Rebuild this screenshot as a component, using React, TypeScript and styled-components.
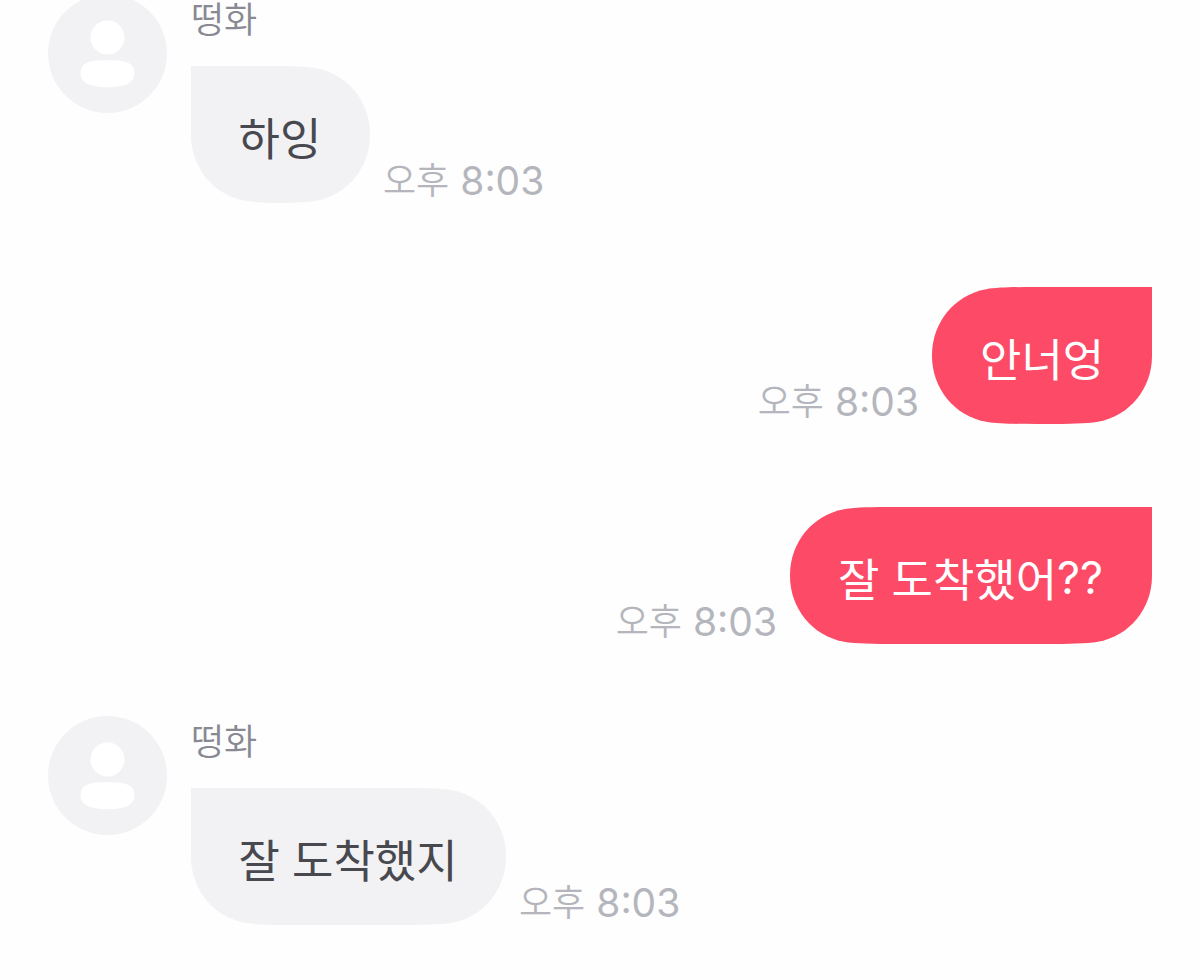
import styled, { createGlobalStyle } from "styled-components"

const messages = [
  { id: 1, mine: false, name: '떵화', text: '하잉', width: 179 },
  { id: 2, mine: true, name: '', text: '안너엉', width: 220 },
  { id: 3, mine: true, name: '', text: '잘 도착했어', tail: '??', width: 362 },
  { id: 4, mine: false, name: '떵화', text: '잘 도착했지', width: 315 },
]

// round bubble with a soft shoulder, one top corner stays square
const bubbleShape = (w: number, mine: boolean) => {
  const s = Math.min(104, w / 2)
  const top = mine
    ? `M0 68C0 36 22 8 54 2.2C66 0.2 84 0 ${s} 0H${w}V69`
    : `M0 68V0H${w - s}C${w - 84} 0 ${w - 66} 0.2 ${w - 54} 2.2C${w - 22} 8 ${w} 36 ${w} 68V69`
  return `${top}C${w} 101 ${w - 22} 129 ${w - 54} 134.8C${w - 66} 136.8 ${w - 84} 137 ${w - s} 137H${s}C84 137 66 136.8 54 134.8C22 129 0 101 0 69Z`
}

const App = () => {
  return (
    <Chat>
      <GlobalStyle />
      {messages.map((message) => (
        <Message key={message.id} $mine={message.mine}>
          {!message.mine && <Profile />}
          <Content>
            {!message.mine && <Name>{message.name}</Name>}
            <Line $mine={message.mine}>
              <Bubble $mine={message.mine} $width={message.width}>
                <span>{message.text}</span>
                {message.tail && <Tail>{message.tail}</Tail>}
              </Bubble>
              <Time>
                <span>오후</span>
                <Clock>8:03</Clock>
              </Time>
            </Line>
          </Content>
        </Message>
      ))}
    </Chat>
  )
}

const Profile = () => {
  return (
    <Avatar viewBox="0 0 119 119">
      <circle cx="59.5" cy="59.5" r="59.5" fill="#f2f2f5" />
      <circle cx="59.5" cy="43.5" r="17" fill="#ffffff" />
      <path
        d="M59.5 66.3C74 66.3 86.5 67 86.5 79.5C86.5 90.5 73 93.2 59.5 93.2C46 93.2 32.5 90.5 32.5 79.5C32.5 67 45 66.3 59.5 66.3Z"
        fill="#ffffff"
      />
    </Avatar>
  )
}

export default App

const GlobalStyle = createGlobalStyle`
  body {
    margin: 0;
    background: #fefefe;
    overflow: hidden;
  }
`

const Chat = styled.div`
  height: 980px;
  box-sizing: border-box;
  overflow: hidden;
  padding: 0 48px;
  font-family: 'Noto Sans CJK KR', sans-serif;
  font-weight: 400;
`

const Message = styled.div<{ $mine: boolean }>`
  display: flex;
  justify-content: ${({ $mine }) => ($mine ? 'flex-end' : 'flex-start')};
  align-items: flex-start;
  gap: 24px;
  margin-bottom: 84px;

  &:first-child {
    margin-top: -6px;
  }

  &:nth-child(2) {
    margin-bottom: 83px;
  }

  &:nth-child(3) {
    margin-bottom: 72px;
  }
`

const Avatar = styled.svg`
  width: 119px;
  height: 119px;
  flex-shrink: 0;
`

const Content = styled.div`
  display: flex;
  flex-direction: column;
`

const Name = styled.div`
  height: 72px;
  font-weight: 350;
  font-size: 36px;
  line-height: 47px;
  color: #888992;
`

const Line = styled.div<{ $mine: boolean }>`
  display: flex;
  flex-direction: ${({ $mine }) => ($mine ? 'row-reverse' : 'row')};
  align-items: flex-end;
  gap: 13px;
`

const Bubble = styled.div<{ $mine: boolean; $width: number }>`
  width: ${({ $width }) => $width}px;
  height: 137px;
  box-sizing: border-box;
  display: flex;
  align-items: center;
  padding: 5px 0 0 ${({ $mine }) => ($mine ? '48px' : '47.5px')};
  white-space: pre;
  font-size: 45px;
  line-height: 60px;
  word-spacing: 2px;
  color: ${({ $mine }) => ($mine ? '#ffffff' : '#48484f')};
  background: ${({ $mine }) => ($mine ? '#fd4a67' : '#f2f2f5')};
  clip-path: path('${({ $width, $mine }) => bubbleShape($width, $mine)}');
`

const Tail = styled.span`
  font-family: Inter, sans-serif;
  font-size: 45px;
`

const Time = styled.div`
  height: 45px;
  display: flex;
  align-items: center;
  gap: 11px;
  white-space: nowrap;
  font-weight: 350;
  font-size: 36px;
  line-height: 46px;
  color: #b5b6bd;

  span:first-child {
    margin-top: -6px;
  }
`

const Clock = styled.span`
  font-family: Inter, sans-serif;
  font-weight: 400;
  font-size: 39px;
`
